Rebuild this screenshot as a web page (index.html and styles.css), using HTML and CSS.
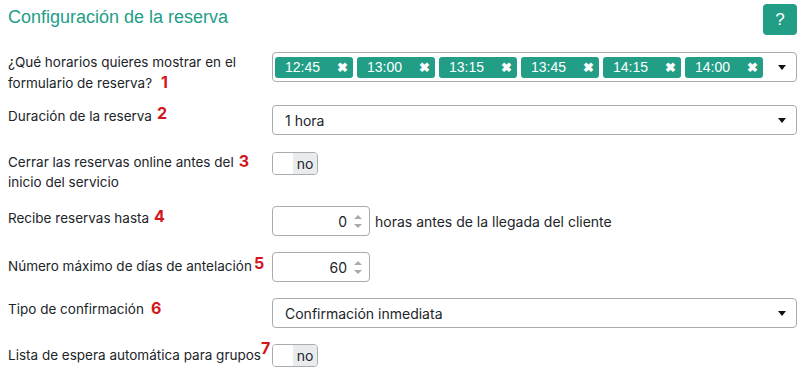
FILE: index.html
```html
<!DOCTYPE html>
<html lang="es">
<head>
  <meta charset="UTF-8" />
  <title>Configuración de la reserva</title>
  <meta name="viewport" content="width=device-width, initial-scale=1" />
  <link rel="stylesheet" href="styles.css">
</head>
<body>
  <div class="panel">
    <div class="head">
      <h2 class="title">Configuración de la reserva</h2>
      <button class="help">?</button>
    </div>

    <div class="row row-1">
      <label class="label">¿Qué horarios quieres mostrar en el formulario de reserva?<span class="mark m1">1</span></label>
      <div class="field">
        <div class="multi">
          <span class="tag">12:45<i>✖</i></span>
          <span class="tag">13:00<i>✖</i></span>
          <span class="tag">13:15<i>✖</i></span>
          <span class="tag">13:45<i>✖</i></span>
          <span class="tag">14:15<i>✖</i></span>
          <span class="tag">14:00<i>✖</i></span>
          <span class="caret"></span>
        </div>
      </div>
    </div>

    <div class="row row-2">
      <label class="label">Duración de la reserva<span class="mark m2">2</span></label>
      <div class="field">
        <div class="select">1 hora<span class="caret"></span></div>
      </div>
    </div>

    <div class="row row-3">
      <label class="label">Cerrar las reservas online antes del<span class="mark m3">3</span> inicio del servicio</label>
      <div class="field">
        <div class="toggle"><span class="knob"></span><span class="state">no</span></div>
      </div>
    </div>

    <div class="row row-4">
      <label class="label">Recibe reservas hasta<span class="mark m4">4</span></label>
      <div class="field inline">
        <div class="number">0<span class="spin"><b class="up"></b><b class="down"></b></span></div>
        <span class="after">horas antes de la llegada del cliente</span>
      </div>
    </div>

    <div class="row row-5">
      <label class="label nowrap">Número máximo de días de antelación<span class="mark m5">5</span></label>
      <div class="field inline">
        <div class="number">60<span class="spin"><b class="up"></b><b class="down"></b></span></div>
      </div>
    </div>

    <div class="row row-6">
      <label class="label">Tipo de confirmación<span class="mark m6">6</span></label>
      <div class="field">
        <div class="select">Confirmación inmediata<span class="caret"></span></div>
      </div>
    </div>

    <div class="row row-7">
      <label class="label nowrap">Lista de espera automática para grupos<span class="mark m7">7</span></label>
      <div class="field">
        <div class="toggle"><span class="knob"></span><span class="state">no</span></div>
      </div>
    </div>
  </div>
</body>
</html>
```

FILE: styles.css
```css
:root {
  --teal: #229e87;
  --text: #212529;
  --border: #a8abaf;
  --red: #d3161b;
}
* { box-sizing: border-box; }
body {
  margin: 0;
  font-family: Inter, 'Liberation Sans', sans-serif;
  font-size: 13.5px;
  color: var(--text);
  background: #fff;
}
.panel {
  padding: 4px 10px 0 8px;
}
.head {
  display: flex;
  justify-content: space-between;
  align-items: flex-start;
  height: 48px;
}
.title {
  margin: 2px 0 0;
  font-family: 'Liberation Sans', sans-serif;
  font-size: 18px;
  font-weight: normal;
  color: var(--teal);
  line-height: 22px;
}
.help {
  width: 34px;
  height: 31px;
  border: none;
  border-radius: 4px;
  background: var(--teal);
  color: #fff;
  font-family: 'Liberation Sans', sans-serif;
  font-size: 17px;
  padding: 0;
}
.row {
  display: grid;
  grid-template-columns: 264px 1fr;
  margin-bottom: 16px;
}
.row-1 { margin-bottom: 12px; }
.row-2 { margin-bottom: 17px; }
.row-3 { margin-bottom: 14px; }
.label {
  line-height: 20px;
  padding-right: 4px;
}
.label.nowrap { white-space: nowrap; }
.row-3 .label { margin-top: -1px; }
.row-4 .label { margin-top: 1px; }
.row-5 .label { margin-top: 3px; }
.mark {
  position: relative;
  color: var(--red);
  font-weight: bold;
  font-size: 16px;
}
.m1 { margin-left: 9px; }
.m2 { margin-left: 5px; top: -2px; }
.m3 { margin-left: 5px; }
.m4 { margin-left: 5px; top: -1px; }
.m5 { margin-left: 2px; top: -2px; }
.m6 { margin-left: 7px; }
.m7 { margin-left: 0; top: -6px; }

.field { min-width: 0; }
.field.inline {
  display: flex;
  align-items: center;
  gap: 5px;
}
.multi, .select {
  position: relative;
  height: 30px;
  border: 1px solid var(--border);
  border-radius: 4px;
  display: flex;
  align-items: center;
}
.multi {
  gap: 4px;
  padding: 0 0 0 2px;
}
.tag {
  display: flex;
  align-items: center;
  justify-content: space-between;
  width: 78px;
  height: 21px;
  padding: 0 5px 0 10px;
  background: var(--teal);
  color: #fff;
  border-radius: 3px;
  font-family: 'Liberation Sans', sans-serif;
  font-size: 14px;
}
.tag i {
  font-style: normal;
  font-size: 13px;
  font-weight: bold;
}
.select {
  padding: 0 12px;
  font-size: 14px;
}
.caret {
  position: absolute;
  right: 10px;
  top: 12px;
  border-left: 4px solid transparent;
  border-right: 4px solid transparent;
  border-top: 5px solid #111;
}
.toggle {
  display: flex;
  width: 46px;
  height: 23px;
  border: 1px solid var(--border);
  border-radius: 4px;
  overflow: hidden;
}
.knob {
  width: 20px;
  background: #fff;
}
.state {
  flex: 1;
  background: #e9ecef;
  text-align: center;
  line-height: 21px;
  font-size: 14px;
}
.number {
  display: flex;
  align-items: center;
  justify-content: flex-end;
  width: 98px;
  height: 30px;
  border: 1px solid var(--border);
  border-radius: 4px;
  padding-right: 7px;
  font-size: 14px;
}
.spin {
  display: flex;
  flex-direction: column;
  gap: 5px;
  margin-left: 7px;
}
.spin b {
  display: block;
  border-left: 4px solid transparent;
  border-right: 4px solid transparent;
}
.spin .up { border-bottom: 4px solid #aaa; }
.spin .down { border-top: 4px solid #aaa; }
.after { white-space: nowrap; font-size: 14px; }
```
